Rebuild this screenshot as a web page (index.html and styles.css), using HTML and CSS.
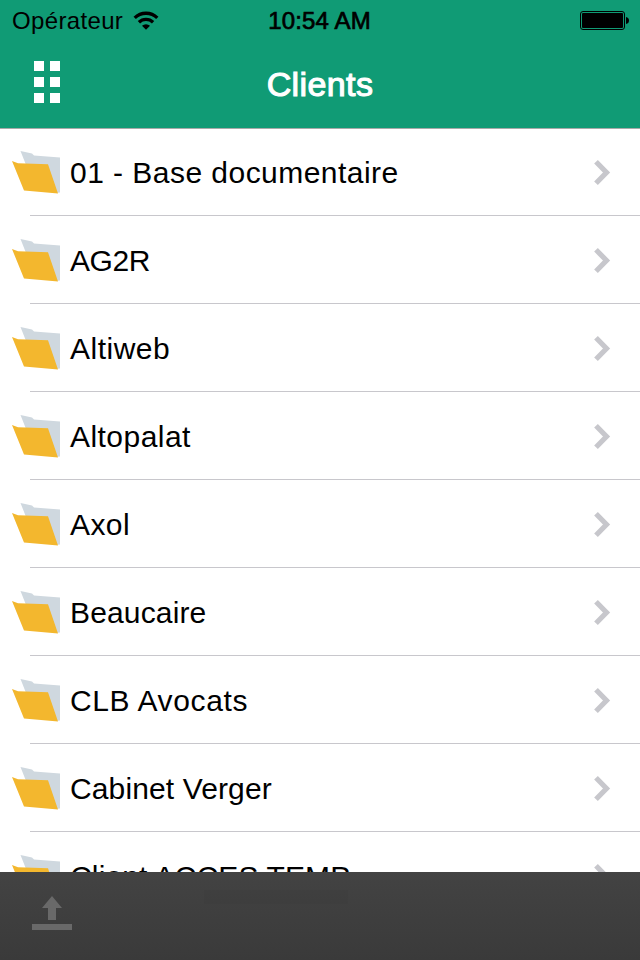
FILE: index.html
```
<!DOCTYPE html>
<html lang="fr">
<head>
<meta charset="utf-8">
<title>Clients</title>
<link rel="stylesheet" href="styles.css">
</head>
<body>
<svg class="defs" aria-hidden="true">
  <symbol id="folder" viewBox="0 0 48 44">
    <path d="M8.500 0 20 2.500 22 4.500 48 6.500V41.500L44 42 18 24Z" fill="#cfd8df"/>
    <path d="M0 10 6 12.300 36 13.300 46 42.500 12 39.500Z" fill="#f3b72e"/>
  </symbol>
  <symbol id="chevron" viewBox="0 0 18 28">
    <path d="M2 2.800 12.500 13.500 2 24.200" fill="none" stroke="#c7c7cc" stroke-width="5.200"/>
  </symbol>
</svg>
<div class="screen">
  <header class="header">
    <div class="status">
      <div class="carrier"><span class="operator">Opérateur</span>
        <svg class="wifi" width="26" height="20" viewBox="0 0 26 20">
          <g fill="none" stroke="#000" stroke-width="3.300">
            <path d="M1.700 6.900A16 16 0 0 1 24.300 6.900"/>
            <path d="M5.900 11.300A10.200 10.200 0 0 1 20.100 11.300"/>
          </g>
          <path d="M9 14.700A6 6 0 0 1 17 14.700L13 18.700Z"/>
        </svg>
      </div>
      <div class="time">10:54 AM</div>
      <svg class="battery" width="49" height="19" viewBox="0 0 49 19">
        <rect x=".5" y=".5" width="44" height="18" rx="2.500" fill="none" stroke="#000"/>
        <rect x="2" y="2" width="41" height="15" rx="1"/>
        <path d="M46 6q3 .5 3 3.500t-3 3.500Z"/>
      </svg>
    </div>
    <div class="nav">
      <div class="grid"><i></i><i></i><i></i><i></i><i></i><i></i></div>
      <h1 class="title">Clients</h1>
    </div>
  </header>
  <main class="list">
    <div class="row"><svg class="folder"><use href="#folder"/></svg><span class="name n1">01 - Base documentaire</span><svg class="chevron"><use href="#chevron"/></svg></div>
    <div class="row"><svg class="folder"><use href="#folder"/></svg><span class="name n2">AG2R</span><svg class="chevron"><use href="#chevron"/></svg></div>
    <div class="row"><svg class="folder"><use href="#folder"/></svg><span class="name n3">Altiweb</span><svg class="chevron"><use href="#chevron"/></svg></div>
    <div class="row"><svg class="folder"><use href="#folder"/></svg><span class="name n4">Altopalat</span><svg class="chevron"><use href="#chevron"/></svg></div>
    <div class="row"><svg class="folder"><use href="#folder"/></svg><span class="name n5">Axol</span><svg class="chevron"><use href="#chevron"/></svg></div>
    <div class="row"><svg class="folder"><use href="#folder"/></svg><span class="name n6">Beaucaire</span><svg class="chevron"><use href="#chevron"/></svg></div>
    <div class="row"><svg class="folder"><use href="#folder"/></svg><span class="name n7">CLB Avocats</span><svg class="chevron"><use href="#chevron"/></svg></div>
    <div class="row"><svg class="folder"><use href="#folder"/></svg><span class="name n8">Cabinet Verger</span><svg class="chevron"><use href="#chevron"/></svg></div>
    <div class="row"><svg class="folder"><use href="#folder"/></svg><span class="name n9">Client ACCES TEMP</span><svg class="chevron"><use href="#chevron"/></svg></div>
  </main>
  <footer class="toolbar">
    <svg width="40" height="34" viewBox="0 0 40 34" fill="#696969">
      <path d="M20 0 30 12H24V24H16V12H10ZM0 28H40V34H0Z"/>
    </svg>
  </footer>
</div>
</body>
</html>
```
FILE: styles.css
```
* { box-sizing: border-box; }
body {
  margin: 0;
  background: #fff;
  color: #000;
  font-family: "Liberation Sans", Arial, sans-serif;
}
.defs { display: none; }
.screen {
  display: flex;
  flex-direction: column;
  width: 640px;
  height: 960px;
  overflow: hidden;
}
.header {
  flex: none;
  height: 129px;
  background: #109b75;
  border-bottom: 1px solid #a7aaa9;
}
.status {
  display: grid;
  grid-template-columns: 1fr auto 1fr;
  align-items: center;
  height: 40px;
  padding: 1px 11px 0 12px;
  font-size: 24px;
  line-height: 40px;
}
.carrier { display: flex; align-items: center; gap: 10px; }
.operator { letter-spacing: 0.35px; }
.wifi { margin-top: -1px; }
.time { -webkit-text-stroke: 0.7px #000; letter-spacing: 0.15px; margin-left: -2px; }
.battery { justify-self: end; margin-top: -2px; }
.nav {
  display: grid;
  grid-template-columns: 1fr auto 1fr;
  height: 88px;
  padding: 0 34px;
}
.grid {
  display: grid;
  grid-template-columns: 10px 10px;
  grid-auto-rows: 10px;
  gap: 6px;
  align-content: start;
  padding-top: 21px;
}
.grid i { background: #fff; }
.title {
  margin: 0;
  color: #fff;
  font-size: 34px;
  font-weight: 400;
  line-height: 88px;
  letter-spacing: 0.4px;
  -webkit-text-stroke: 1.1px #fff;
}
.list { flex: 1; min-height: 0; margin-top: -1px; overflow: hidden; }
.row {
  display: flex;
  align-items: center;
  height: 88px;
  padding: 0 28px 0 12px;
  background: linear-gradient(#c8c7cc, #c8c7cc) 30px 87px / 610px 1px no-repeat;
}
.folder { flex: none; width: 48px; height: 44px; margin-top: 1px; filter: blur(0.7px); }
.name {
  flex: 1;
  margin-left: 10px;
  font-size: 30px;
  line-height: 88px;
  white-space: nowrap;
  padding-top: 2px;
}
.n1 { letter-spacing: 0.46px; }
.n2 { letter-spacing: -0.4px; }
.n3 { letter-spacing: 0.5px; }
.n4 { letter-spacing: 0.45px; }
.n5 { letter-spacing: 0.4px; }
.n6 { letter-spacing: 0.15px; }
.n7 { letter-spacing: 0.62px; }
.n8 { letter-spacing: 0.12px; }
.n9 { letter-spacing: 0.15px; }
.chevron { flex: none; width: 18px; height: 28px; margin-top: 1px; }
.toolbar {
  flex: none;
  height: 88px;
  padding: 24px 32px;
  background:
    linear-gradient(rgba(0, 0, 0, 0.03), rgba(0, 0, 0, 0.03)) 204px 18px / 144px 14px no-repeat,
    linear-gradient(#434343, #3a3a3a);
}
.toolbar svg { display: block; }
```
